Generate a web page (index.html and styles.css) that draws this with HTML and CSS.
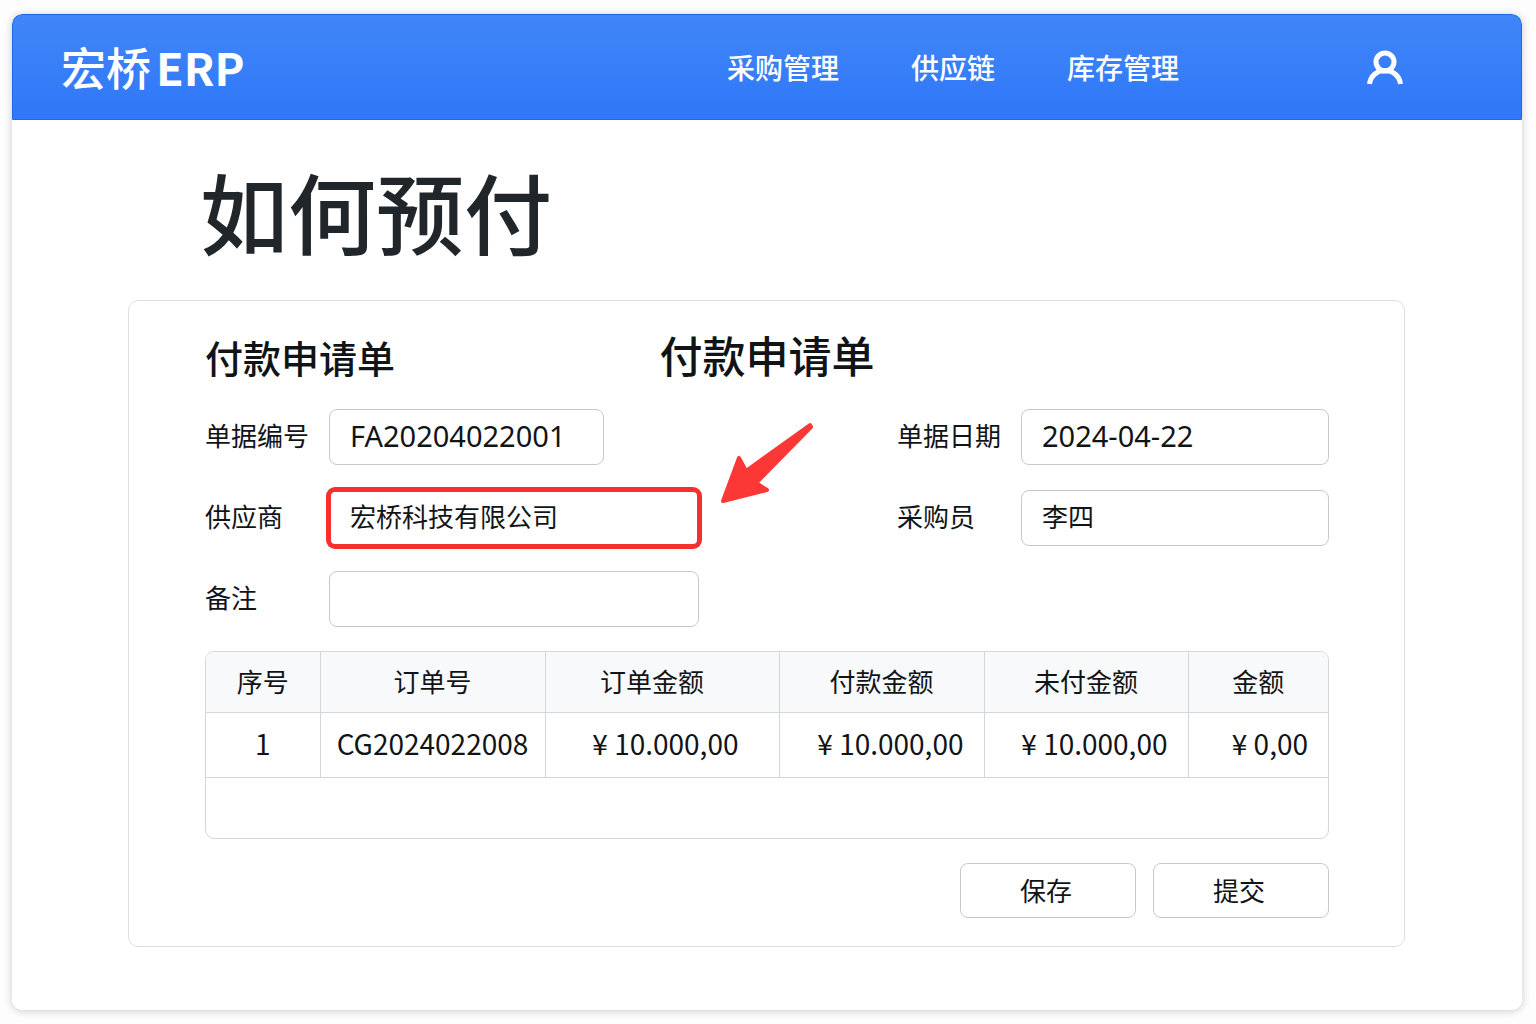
FILE: index.html
```html
<!DOCTYPE html>
<html lang="zh-CN">
  <head>
    <meta charset="UTF-8">
    <meta name="viewport" content="width=device-width, initial-scale=1.0">
    <title>宏桥ERP</title>
    <link rel="stylesheet" href="styles.css">
  </head>

  <body>
    <div class="page">

      <header class="topbar">
        <a href="#" class="logo">宏桥<b>ERP</b></a>
        <nav class="menu">
          <a href="#">采购管理</a>
          <a href="#">供应链</a>
          <a href="#">库存管理</a>
        </nav>
        <button class="user" type="button" aria-label="用户">
          <svg width="38" height="36" viewBox="0 0 38 36" fill="none" stroke="#fff" stroke-width="5">
            <circle cx="19" cy="13" r="9"/>
            <path d="M3.500 35C4.500 27 11 21.500 19 21.500S33.500 27 34.500 35"/>
          </svg>
        </button>
      </header>

      <main class="content">
        <h1>如何预付</h1>

        <form class="panel">
          <div class="panel-head">
            <h2>付款申请单</h2>
            <h2 class="big">付款申请单</h2>
          </div>

          <div class="fields">
            <div class="field">
              <label for="billNo">单据编号</label>
              <input id="billNo" class="short" type="text" value="FA20204022001">
            </div>
            <div class="field">
              <label for="billDate">单据日期</label>
              <input id="billDate" type="text" value="2024-04-22">
            </div>
            <div class="field">
              <label for="supplier">供应商</label>
              <input id="supplier" class="wide marked" type="text" value="宏桥科技有限公司">
              <svg class="arrow" width="94" height="82" viewBox="0 0 94 82">
                <path d="M3 79L19 36L26 49L90 3L91 5L36 61L47 68Z" fill="#fb3836" stroke="#fb3836" stroke-width="4" stroke-linejoin="round"/>
              </svg>
            </div>
            <div class="field">
              <label for="buyer">采购员</label>
              <input id="buyer" type="text" value="李四">
            </div>
            <div class="field">
              <label for="remark">备注</label>
              <input id="remark" class="wide" type="text">
            </div>
          </div>

          <div class="table-box">
            <table>
              <colgroup>
                <col class="c-index">
                <col class="c-order">
                <col class="c-total">
                <col class="c-paid">
                <col class="c-unpaid">
                <col>
              </colgroup>
              <thead>
                <tr>
                  <th>序号</th>
                  <th>订单号</th>
                  <th class="total">订单金额</th>
                  <th>付款金额</th>
                  <th>未付金额</th>
                  <th>金额</th>
                </tr>
              </thead>
              <tbody>
                <tr>
                  <td>1</td>
                  <td>CG2024022008</td>
                  <td class="right first">¥ 10.000,00</td>
                  <td class="right">¥ 10.000,00</td>
                  <td class="right">¥ 10.000,00</td>
                  <td class="right">¥ 0,00</td>
                </tr>
                <tr class="empty">
                  <td colspan="6"></td>
                </tr>
              </tbody>
            </table>
          </div>

          <div class="actions">
            <button type="button">保存</button>
            <button type="button">提交</button>
          </div>
        </form>
      </main>

    </div>
  </body>
</html>
```

FILE: styles.css
```css
* {
  box-sizing: border-box;
}

body {
  margin: 0;
  padding: 14px 14px 14px 12px;
  background: #fdfdfd;
  color: #111417;
  font-family: "Noto Sans CJK SC", sans-serif;
  font-size: 26px;
}

.page {
  min-height: calc(100vh - 28px);
  background: #fff;
  border-radius: 10px;
  box-shadow: 0 1px 8px rgba(0, 0, 0, 0.2);
  overflow: hidden;
}

/* top bar */
.topbar {
  display: flex;
  align-items: center;
  height: 106px;
  padding: 0 117px 0 48px;
  background: linear-gradient(#4086f8, #3077f9);
  border: 1px solid #1b6be4;
  border-radius: 10px 10px 0 0;
}

.topbar a {
  color: #fff;
  text-decoration: none;
}

.logo {
  font-size: 45px;
  font-weight: 500;
  line-height: 60px;
}

.logo b {
  margin-left: 5px;
  font-weight: 700;
}

.menu {
  display: flex;
  gap: 72px;
  margin-left: auto;
  margin-right: 187px;
  font-size: 28px;
  font-weight: 500;
}

.user {
  padding: 0;
  background: none;
  border: 0;
  cursor: pointer;
}

.user svg {
  display: block;
}

/* content */
.content {
  padding: 30px 117px 62px 116px;
}

h1 {
  margin: 0 0 30px 72px;
  font-size: 88px;
  font-weight: 500;
  line-height: 120px;
  color: #20262a;
}

.panel {
  padding: 28px 75px 28px 76px;
  border: 1px solid #dcdfe1;
  border-radius: 10px;
}

.panel-head {
  display: grid;
  grid-template-columns: 1fr auto 1fr;
  align-items: start;
  margin-bottom: 24px;
}

h2 {
  margin: 0;
  font-size: 38px;
  font-weight: 500;
  line-height: 56px;
}

h2.big {
  font-size: 43px;
  line-height: 50px;
}

.fields {
  display: grid;
  grid-template-columns: 1fr 432px;
  row-gap: 25px;
  margin-bottom: 24px;
}

.field {
  display: flex;
  align-items: center;
  position: relative;
}

.field label {
  flex: 0 0 124px;
  padding-bottom: 6px;
}

.field input {
  flex: 1;
  min-width: 0;
  height: 56px;
  padding: 0 20px 4px;
  background: #fff;
  border: 1px solid #c6cacc;
  border-radius: 8px;
  color: inherit;
  font-family: "Noto Sans", "Noto Sans CJK SC", sans-serif;
  font-size: 26px;
}

.field input.short {
  flex: 0 0 275px;
}

.field input.wide {
  flex: 0 0 370px;
}

.field input.marked {
  padding: 0 19px 4px;
  border: 2px solid #f5302e;
  border-radius: 6px;
  box-shadow: 0 0 0 3px #f5302e;
}

.field #billNo,
.field #billDate {
  font-size: 29px;
}

.arrow {
  position: absolute;
  left: 515px;
  bottom: 42px;
}

/* order table */
.table-box {
  margin-bottom: 24px;
  border: 1px solid #d3d7da;
  border-radius: 9px;
  overflow: hidden;
}

table {
  width: 100%;
  table-layout: fixed;
  border-collapse: collapse;
}

.c-index { width: 114px; }
.c-order { width: 225px; }
.c-total { width: 234px; }
.c-paid { width: 205px; }
.c-unpaid { width: 204px; }

th,
td {
  padding: 0 0 3px;
  border-right: 1px solid #d3d7da;
  border-bottom: 1px solid #d3d7da;
  text-align: center;
}

th:last-child,
td:last-child {
  border-right: 0;
}

th {
  height: 60px;
  background: #f7f9fb;
  font-weight: 400;
}

th.total {
  padding-right: 20px;
}

td {
  height: 65px;
  font-size: 28px;
}

td.right {
  padding-right: 20px;
  text-align: right;
}

td.first {
  padding-right: 40px;
}

.empty td {
  height: 61px;
  border-bottom: 0;
}

/* buttons */
.actions {
  display: flex;
  justify-content: flex-end;
  gap: 17px;
}

.actions button {
  width: 176px;
  height: 55px;
  padding: 0 4px 3px 0;
  background: #fff;
  border: 1px solid #c6cacc;
  border-radius: 8px;
  color: inherit;
  font-family: inherit;
  font-size: 26px;
  cursor: pointer;
}
```
